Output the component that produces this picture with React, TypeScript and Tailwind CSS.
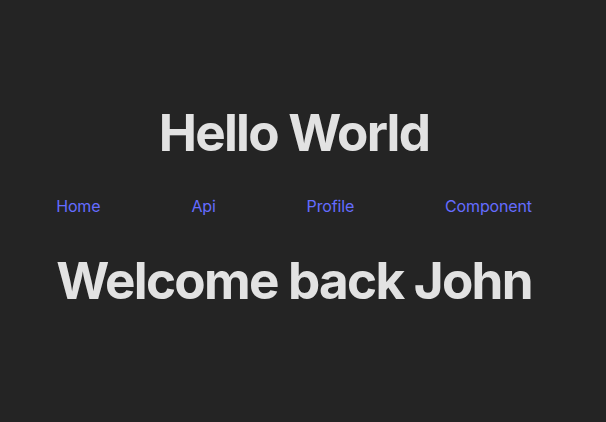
export default function App() {
  const links = ['Home', 'Api', 'Profile', 'Component'];

  return (
    <div className="min-h-screen bg-[#242424] flex items-center justify-center pb-[10px] pr-[18px] text-center text-[rgba(255,255,255,0.87)] font-['Inter',sans-serif]">
      <div className="flex flex-col items-stretch gap-[34px]">
        <h1 className="text-[51.2px] leading-[1.1] font-bold tracking-[-0.034em]">Hello World</h1>
        <nav className="flex justify-between text-base leading-6 font-normal tracking-[-0.01em]">
          {links.map((l) => (
            <a key={l} href="#" className="text-[#646cff] hover:text-[#535bf2]">
              {l}
            </a>
          ))}
        </nav>
        <h1 className="text-[51.2px] leading-[1.1] font-bold tracking-[-0.034em]">Welcome back John</h1>
      </div>
    </div>
  );
}
